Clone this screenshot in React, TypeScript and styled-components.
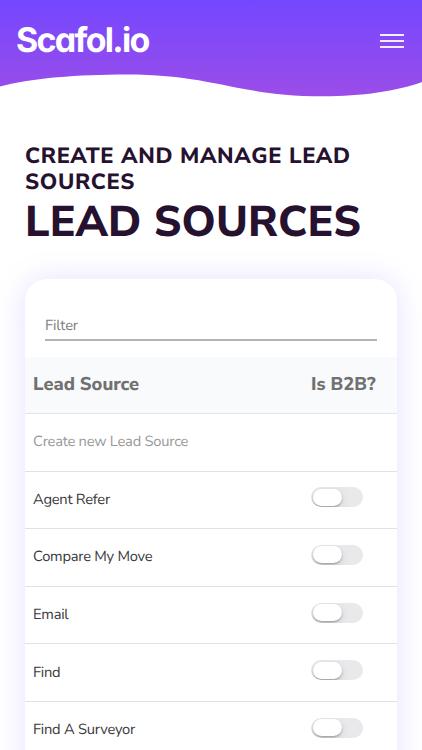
import React from "react";
import styled, { createGlobalStyle } from "styled-components";

const GlobalStyle = createGlobalStyle`
  *, *::before, *::after { box-sizing: border-box; }
  html, body { margin: 0; background: #fff; }
  body {
    height: 750px;
    overflow: hidden;
    font-family: "Nunito Sans", Nunito, Lato, "Open Sans", sans-serif;
    text-rendering: geometricPrecision;
    -webkit-font-smoothing: antialiased;
  }
`;

const Page = styled.div`
  height: 750px;
  overflow: hidden;
`;

const Header = styled.header`
  display: grid;
  height: 97px;
  & > * { grid-area: 1 / 1; }
`;

const Wave = styled.svg`
  display: block;
  width: 100%;
  height: 97px;
`;

const Bar = styled.div`
  display: flex;
  justify-content: space-between;
  align-items: flex-start;
  padding: 20px 18px 0 16px;
`;

const Logo = styled.div`
  font-family: Gilroy, Inter, sans-serif;
  font-feature-settings: "cv11";
  font-weight: 650;
  font-size: 34px;
  line-height: 41px;
  letter-spacing: -1.7px;
  color: #fff;
  white-space: nowrap;
`;

const MenuButton = styled.button`
  display: flex;
  flex-direction: column;
  gap: 4px;
  margin: 14px 0 0;
  padding: 0;
  border: 0;
  background: none;
`;

const MenuLine = styled.span`
  width: 24px;
  height: 2px;
  background: #f3edff;
`;

const Heading = styled.div`
  padding: 46px 20px 0 25px;
  color: #26122f;
  text-transform: uppercase;
`;

const Subtitle = styled.h2`
  margin: 0;
  font-size: 22px;
  line-height: 26px;
  font-weight: 800;
  letter-spacing: 0.65px;
`;

const Title = styled.h1`
  margin: 0;
  padding-top: 2px;
  font-size: 43px;
  line-height: 52px;
  font-weight: 850;
  letter-spacing: 0.2px;
  white-space: nowrap;
`;

const Card = styled.main`
  margin: 30px 25px 0;
  height: 540px;
  border-radius: 22px;
  background: #fff;
  box-shadow: 0 0 30px rgba(112, 72, 255, 0.17);
  overflow: hidden;
`;

const FilterArea = styled.div`
  height: 78px;
  padding: 35px 20px 0;
`;

const FilterField = styled.div`
  height: 27px;
  border-bottom: 2px solid #b3b3b3;
  font-size: 14.7px;
  line-height: 24px;
  letter-spacing: -0.15px;
  color: #808080;
`;

const Row = styled.div<{ $head?: boolean }>`
  display: grid;
  grid-template-columns: 286px 1fr;
  align-items: center;
  height: ${(p) => (p.$head ? "57.1px" : "57.55px")};
  border-bottom: 1.5px solid ${(p) => (p.$head ? "#e3e5e7" : "#e2e2e4")};
  background: ${(p) => (p.$head ? "#f8fafc" : "#fff")};
`;

const HeadCell = styled.div`
  padding-left: 8px;
  font-size: 18.4px;
  line-height: 24px;
  font-weight: 800;
  color: #717171;
  letter-spacing: -0.05px;
  &:last-child { padding-left: 0; }
`;

const Cell = styled.div<{ $muted?: boolean }>`
  padding-left: 8px;
  font-size: 14.7px;
  line-height: 20px;
  letter-spacing: -0.24px;
  color: ${(p) => (p.$muted ? "#999" : "#38393b")};
`;

const Switch = styled.div`
  width: 52px;
  height: 20px;
  margin-top: -5px;
  padding: 1.5px;
  border-radius: 10px;
  background: #e9e9eb;
  overflow: hidden;
`;

const Knob = styled.div`
  width: 29px;
  height: 17px;
  border-radius: 9px;
  background: #fff;
  box-shadow: 0 1.5px 2px rgba(0, 0, 0, 0.25), 0 3px 8px rgba(0, 0, 0, 0.1);
`;

const sources = ["Agent Refer", "Compare My Move", "Email", "Find", "Find A Surveyor"];

export default function App() {
  return (
    <Page>
      <GlobalStyle />
      <Header>
        <Wave viewBox="0 0 422 97" preserveAspectRatio="none" aria-hidden="true">
          <defs>
            <linearGradient id="sky" x1="0" y1="0" x2="0" y2="1">
              <stop offset="0" stopColor="#7447ff" />
              <stop offset="1" stopColor="#9b4de8" />
            </linearGradient>
          </defs>
          <path
            fill="url(#sky)"
            d="M0 0H422V82C397 91 362 96.300 323 96.300C237 96.300 215 74.500 126 74.500C78 74.500 32 78 0 86.500Z"
          />
        </Wave>
        <Bar>
          <Logo>Scafol.io</Logo>
          <MenuButton aria-label="Menu">
            <MenuLine />
            <MenuLine />
            <MenuLine />
          </MenuButton>
        </Bar>
      </Header>
      <Heading>
        <Subtitle>Create and manage lead sources</Subtitle>
        <Title>Lead Sources</Title>
      </Heading>
      <Card>
        <FilterArea>
          <FilterField>Filter</FilterField>
        </FilterArea>
        <Row $head>
          <HeadCell>Lead Source</HeadCell>
          <HeadCell>Is B2B?</HeadCell>
        </Row>
        <Row>
          <Cell $muted>Create new Lead Source</Cell>
        </Row>
        {sources.map((name) => (
          <Row key={name}>
            <Cell>{name}</Cell>
            <Switch role="switch" aria-checked={false}>
              <Knob />
            </Switch>
          </Row>
        ))}
      </Card>
    </Page>
  );
}
